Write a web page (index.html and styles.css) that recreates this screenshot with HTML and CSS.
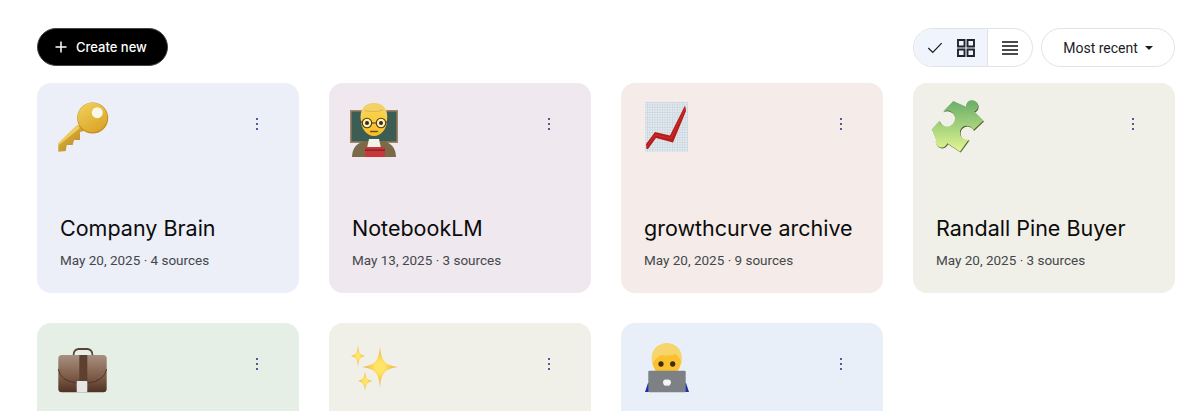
FILE: index.html
```html
<!DOCTYPE html>
<html lang="en">
<head>
<meta charset="utf-8">
<title>NotebookLM</title>
<link rel="stylesheet" href="styles.css">
</head>
<body>
<main class="page">
  <div class="toolbar">
    <button class="create"><svg class="plus" viewBox="0 0 12 12"><path d="M6 .5v11M.5 6h11"/></svg><span>Create new</span></button>
    <div class="controls">
      <div class="toggle">
        <div class="seg seg-on">
          <svg class="ico-check" viewBox="0 0 18 14"><path d="M1.5 7.5l5 5L16.5 2"/></svg>
          <svg class="ico-grid" viewBox="0 0 18 18"><path d="M1 1h6.5v6.5H1zM10.5 1H17v6.5h-6.5zM1 10.5h6.5V17H1zM10.5 10.500H17V17h-6.5z"/></svg>
        </div>
        <div class="seg seg-off">
          <svg class="ico-list" viewBox="0 0 16 14"><path d="M0 1h16M0 5h16M0 9h16M0 13h16"/></svg>
        </div>
      </div>
      <button class="sort"><span>Most recent</span><i class="caret"></i></button>
    </div>
  </div>

  <section class="grid">
    <article class="card c-blue">
      <div class="head">
        <svg class="emoji" viewBox="0 0 60 60">
          <defs>
            <linearGradient id="gk" x1="0" y1="0" x2=".6" y2="1"><stop offset="0" stop-color="#f3d25e"/><stop offset="1" stop-color="#dba628"/></linearGradient>
            <linearGradient id="gks" x1="0" y1="0" x2="1" y2="1"><stop offset="0" stop-color="#e8bf48"/><stop offset="1" stop-color="#ad7d18"/></linearGradient>
          </defs>
          <path d="M24.300 28L5.300 46.300V54.700L12.700 54L13.700 48H19.700L21 43H27V35L35 33z" fill="url(#gks)"/>
          <path d="M24.300 28L5.300 46.300V48.500L27 31z" fill="#f0cd5c"/>
          <circle cx="39.700" cy="21" r="15.500" fill="#c08d1d"/>
          <circle cx="39.500" cy="20.500" r="14.800" fill="url(#gk)"/>
          <circle cx="44.300" cy="15.700" r="5.500" fill="#fbf8e8"/>
        </svg>
        <button class="more" aria-label="More"><i></i><i></i><i></i></button>
      </div>
      <div class="body">
        <h2>Company Brain</h2>
        <p>May 20, 2025 · 4 sources</p>
      </div>
    </article>

    <article class="card c-plum">
      <div class="head">
        <svg class="emoji" viewBox="0 0 60 60">
          <defs><linearGradient id="gf" x1="0" y1="0" x2="0" y2="1"><stop offset="0" stop-color="#fdd94f"/><stop offset="1" stop-color="#f9bd28"/></linearGradient></defs>
          <rect x="5" y="13" width="48" height="33" fill="#a88467"/>
          <rect x="6.500" y="14.500" width="45" height="30" fill="#3b5d54"/>
          <path d="M7 61q0-15 14-17h16q14 2 14 17z" fill="#7b6a47"/>
          <path d="M24 42h10l2 9H22z" fill="#f3f1ea"/>
          <rect x="20" y="50" width="20" height="11" fill="#c5393a"/>
          <rect x="20" y="52.500" width="20" height="1.200" fill="#7c1f22"/>
          <ellipse cx="29" cy="23" rx="13" ry="16" fill="url(#gf)"/>
          <path d="M16 24C14 11 21 6 29 6s15 5 13 18c-1-4-2-7-5-9-6 1-11 1-14 0-4 2-6 5-7 9z" fill="#f3d166"/>
          <path d="M20 13.500c6 1.500 12 1.500 18-.5" fill="none" stroke="#d9ad3c" stroke-width=".8"/>
          <circle cx="22" cy="26" r="4.700" fill="#fff0ae" stroke="#4a3a20" stroke-width="1.100"/>
          <circle cx="36" cy="26" r="4.700" fill="#fff0ae" stroke="#4a3a20" stroke-width="1.100"/>
          <path d="M26.700 26h4.600M15 25h2.300M40.700 25H43" stroke="#4a3a20" stroke-width="1.100"/>
          <circle cx="22" cy="26" r="2" fill="#3a2a16"/>
          <circle cx="36" cy="26" r="2" fill="#3a2a16"/>
          <path d="M25.500 34.500h7" stroke="#7a4f16" stroke-width="1.300" stroke-linecap="round"/>
        </svg>
        <button class="more" aria-label="More"><i></i><i></i><i></i></button>
      </div>
      <div class="body">
        <h2>NotebookLM</h2>
        <p>May 13, 2025 · 3 sources</p>
      </div>
    </article>

    <article class="card c-rose">
      <div class="head">
        <svg class="emoji" viewBox="0 0 60 60">
          <defs><pattern id="gp" width="2.500" height="2.500" patternUnits="userSpaceOnUse"><rect width="2.500" height="2.500" fill="#e4ebf1"/><path d="M0 .4h2.500M.4 0v2.500" stroke="#c6d1da" stroke-width=".6"/></pattern></defs>
          <rect x="8" y="5" width="43" height="50" fill="url(#gp)"/>
          <path d="M9.500 52L9 47l9-12 15 3.500L48 8.500l1 5.500-13 31.500-17-4.500-8 11z" fill="#b71c1c"/>
          <path d="M10 49l8.500-11 15.500 3.500L48.500 11" fill="none" stroke="#d8322c" stroke-width=".8"/>
        </svg>
        <button class="more" aria-label="More"><i></i><i></i><i></i></button>
      </div>
      <div class="body">
        <h2>growthcurve archive</h2>
        <p>May 20, 2025 · 9 sources</p>
      </div>
    </article>

    <article class="card c-sage">
      <div class="head">
        <svg class="emoji" viewBox="0 0 60 60">
          <defs><linearGradient id="gz" x1="0" y1="0" x2="0" y2="1"><stop offset="0" stop-color="#68ad67"/><stop offset="1" stop-color="#e2f692"/></linearGradient></defs>
          <path d="M24.300 4L37 9.700A6 6 0 1 1 45.300 14.700L54.300 23.700L44.300 33A7 7 0 1 0 40 42.300L31 54.700L18.300 46.300A6 6 0 1 1 7 42.300L2.700 32.300L10.300 23.700A8 8 0 1 0 13.700 14.700z" fill="#4e5a2c" transform="translate(.7 .9)"/>
          <path d="M24.300 4L37 9.700A6 6 0 1 1 45.300 14.700L54.300 23.700L44.300 33A7 7 0 1 0 40 42.300L31 54.700L18.300 46.300A6 6 0 1 1 7 42.300L2.700 32.300L10.300 23.700A8 8 0 1 0 13.700 14.700z" fill="url(#gz)"/>
        </svg>
        <button class="more" aria-label="More"><i></i><i></i><i></i></button>
      </div>
      <div class="body">
        <h2>Randall Pine Buyer</h2>
        <p>May 20, 2025 · 3 sources</p>
      </div>
    </article>

    <article class="card c-green">
      <div class="head">
        <svg class="emoji" viewBox="0 0 60 60">
          <defs><linearGradient id="gb" x1="0" y1="0" x2="0" y2="1"><stop offset="0" stop-color="#a89080"/><stop offset=".6" stop-color="#7c5a46"/><stop offset="1" stop-color="#4f3226"/></linearGradient></defs>
          <path d="M20.500 18.500q0-6 5-6.500h9q5 .5 5 6.500" fill="none" stroke="#5b4436" stroke-width="1.800"/>
          <rect x="5.300" y="18" width="48.400" height="37.300" rx="3.500" fill="url(#gb)"/>
          <path d="M5.300 32q2 12 18 14h12q16-2 18.400-14" fill="none" stroke="#4b2f23" stroke-width=".9"/>
          <rect x="26.300" y="18" width="8" height="27" fill="#5e4030"/>
          <rect x="23.700" y="44" width="10.600" height="11.300" rx="1" fill="#e6e6e4"/>
        </svg>
        <button class="more" aria-label="More"><i></i><i></i><i></i></button>
      </div>
    </article>

    <article class="card c-sand">
      <div class="head">
        <svg class="emoji" viewBox="0 0 60 60">
          <defs><radialGradient id="gs"><stop offset=".25" stop-color="#ffe566"/><stop offset="1" stop-color="#f3a63a"/></radialGradient></defs>
          <path d="M35 9C36 24 40 28 52.500 30C40 32 36 36 35 51C34 36 30 32 17.500 30C30 28 34 24 35 9z" fill="url(#gs)"/>
          <path d="M13 8C13.500 15 15 18 20 19C15 20 13.500 23 13 30C12.500 23 11 20 6 19C11 18 12.500 15 13 8z" fill="url(#gs)"/>
          <path d="M20 34C20.500 40 22 43 27.500 44C22 45 20.500 48 20 54C19.500 48 18 45 13 44C18 43 19.500 40 20 34z" fill="url(#gs)"/>
        </svg>
        <button class="more" aria-label="More"><i></i><i></i><i></i></button>
      </div>
    </article>

    <article class="card c-sky">
      <div class="head">
        <svg class="emoji" viewBox="0 0 60 60">
          <path d="M8 55l3-9h38l3 9z" fill="#1d2fb0"/>
          <ellipse cx="29.700" cy="23" rx="14.500" ry="16.500" fill="#fbc02d"/>
          <path d="M15.500 27C12 13 21 6.300 30 6.300S47 13 44.500 27c-1-5-3-8-6-10-6 2-12 2-15 1-3 2-6 5-8 9z" fill="#f5d56c"/>
          <ellipse cx="24" cy="27" rx="2.600" ry="2.800" fill="#3a2a16"/>
          <ellipse cx="35.700" cy="27" rx="2.600" ry="2.800" fill="#3a2a16"/>
          <rect x="11.300" y="33.700" width="37.400" height="21.600" rx="1" fill="#7d8085"/>
          <path d="M28.800 42.500c-2 0-2.800 1.500-2.800 2.800 0 1.800 1.400 3.500 2.400 3.500.6 0 1-.3 1.600-.3s1 .3 1.600.3c1 0 2.400-1.700 2.400-3.500 0-1.300-.8-2.800-2.800-2.800-.5 0-.8.200-1.200.2s-.7-.2-1.200-.2z" fill="#f4f4f4"/>
        </svg>
        <button class="more" aria-label="More"><i></i><i></i><i></i></button>
      </div>
    </article>
  </section>
</main>
</body>
</html>
```

FILE: styles.css
```css
* { box-sizing: border-box; }
html, body { margin: 0; height: 411px; overflow: hidden; background: #fff; }
body { font-family: Roboto, "Liberation Sans", sans-serif; color: #0b0b0b; }
button { font: inherit; cursor: pointer; }

.page { padding: 28px 25px 0 37px; }

.toolbar { display: flex; justify-content: space-between; align-items: flex-start; height: 39px; margin-bottom: 16px; }

.create {
  display: flex; align-items: center; gap: 9px;
  width: 131px; height: 38px; padding: 0 0 0 17px;
  background: #000; color: #fff; border: 1px solid #444; border-radius: 19px;
  font-family: Inter, Roboto, sans-serif; font-size: 13px; font-weight: 500;
}
.plus { width: 12px; height: 12px; fill: none; stroke: #fff; stroke-width: 1.500; }

.controls { display: flex; gap: 8px; }
.toggle { display: flex; width: 120px; height: 39px; border: 1px solid #e1e3e6; border-radius: 20px; overflow: hidden; }
.seg { display: flex; align-items: center; justify-content: center; }
.seg-on { width: 74px; gap: 14px; background: #f0f4fc; border-right: 1px solid #e1e3e6; }
.seg-off { flex: 1; }
.ico-check { width: 16px; height: 13px; fill: none; stroke: #1c1c1e; stroke-width: 1.400; }
.ico-grid { width: 18px; height: 18px; fill: none; stroke: #1c2430; stroke-width: 1.900; }
.ico-list { width: 16px; height: 14px; fill: none; stroke: #111; stroke-width: 1.300; }

.sort {
  display: flex; align-items: center; gap: 7px; justify-content: center;
  width: 134px; height: 39px; background: #fff;
  border: 1px solid #e1e3e6; border-radius: 20px;
  font-size: 14px; color: #1c1c1e; padding: 0;
}
.caret { width: 0; height: 0; border-left: 4.500px solid transparent; border-right: 4.500px solid transparent; border-top: 4.500px solid #1c1c1e; }

.grid { display: grid; grid-template-columns: repeat(4, 262px); grid-auto-rows: 210px; gap: 30px; }

.card { display: flex; flex-direction: column; justify-content: space-between; padding: 14px 22px 24px 23px; border-radius: 14px; }
.c-blue { background: #eceef8; }
.c-plum { background: #efe8ef; }
.c-rose { background: #f5ece9; }
.c-sage { background: #f1f0e8; }
.c-green { background: #e6efe6; }
.c-sand { background: #f1f0e8; }
.c-sky { background: #e9eff9; }

.head { display: flex; justify-content: space-between; align-items: flex-start; }
.emoji { width: 60px; height: 60px; margin-left: -7px; }
.more {
  display: flex; flex-direction: column; align-items: center; justify-content: center; gap: 3px;
  width: 40px; height: 40px; margin-top: 7px; padding: 0;
  background: none; border: 0;
}
.more i { width: 2px; height: 2px; border-radius: 50%; background: #1d2a7a; }

.body h2 { margin: 0 0 9px; font-family: Inter, Roboto, sans-serif; font-size: 21.500px; font-weight: 400; line-height: 28px; color: #0b0b0b; }
.body p { margin: 0; font-size: 13.500px; line-height: 18px; color: #44474a; }
```
